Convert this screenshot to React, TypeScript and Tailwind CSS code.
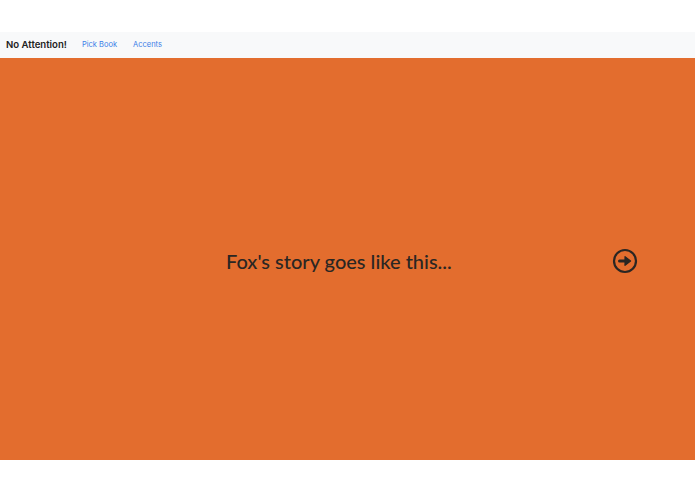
import React from 'react';

function NextIcon() {
  return (
    <svg width="26" height="26" viewBox="0 0 26 26" fill="none" aria-hidden="true">
      <circle cx="13" cy="13" r="11" stroke="#2a2623" strokeWidth="2.2" />
      <path d="M7.5 13h7" stroke="#2a2623" strokeWidth="3" strokeLinecap="round" />
      <path d="M13 8.6 L18.6 13 L13 17.4 Z" fill="#2a2623" stroke="#2a2623" strokeWidth="1.2" strokeLinejoin="round" />
    </svg>
  );
}

export default function App() {
  return (
    <div className="flex h-[494px] w-full flex-col bg-white" style={{ fontFamily: 'Lato, "Noto Sans", sans-serif' }}>
      <div className="h-[32px]" />
      <nav
        className="flex h-[26px] items-center bg-[#f8f9fa] px-[6px] shadow-[0_1px_1px_rgba(0,0,0,0.12)]"
        style={{ fontFamily: 'Inter, "Liberation Sans", sans-serif' }}
      >
        <span className="text-[9.6px] font-semibold text-[#222]">No Attention!</span>
        <a className="ml-[15px] text-[7.5px] text-[#3a7ee8]">Pick Book</a>
        <a className="ml-[16px] text-[7.5px] text-[#3a7ee8]">Accents</a>
      </nav>
      <main className="flex h-[402px] items-center bg-[#e36d2e] pl-[226px] pt-[3px]">
        <p className="text-[20px] font-medium leading-none text-[#2a2623]">Fox's story goes like this...</p>
        <button className="ml-auto mr-[57px] flex items-center justify-center">
          <NextIcon />
        </button>
      </main>
    </div>
  );
}
